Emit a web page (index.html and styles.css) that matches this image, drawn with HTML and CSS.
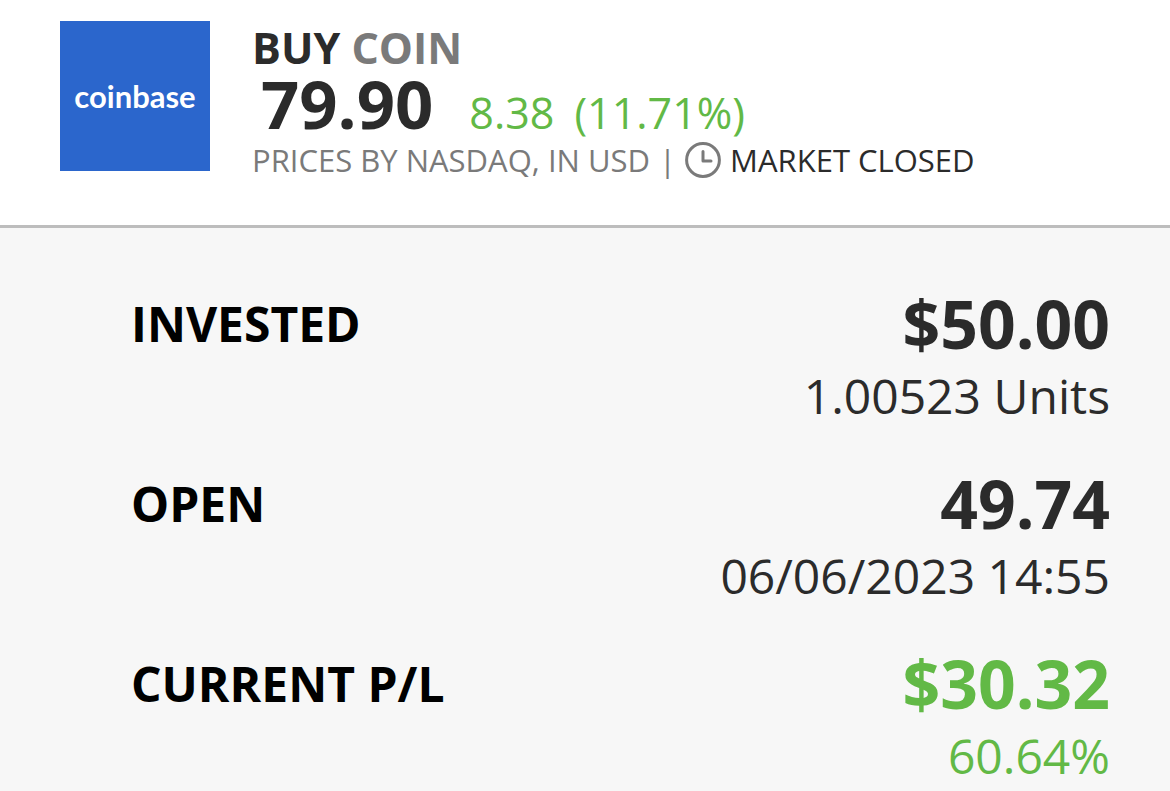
FILE: index.html
```html
<!DOCTYPE html>
<html lang="en">
<head>
<meta charset="utf-8">
<title>COIN position</title>
<link rel="stylesheet" href="styles.css">
</head>
<body>
<header class="instrument">
  <div class="logo">coinbase</div>
  <div class="summary">
    <h1 class="title">BUY <span class="symbol">COIN</span></h1>
    <div class="quote"><span class="price">79.90</span><span class="change">8.38</span><span class="change">(11.71%)</span></div>
    <div class="market"><span>PRICES BY NASDAQ, IN USD</span><span>|</span>
      <svg class="clock" viewBox="0 0 36 36" aria-hidden="true"><circle cx="18" cy="18" r="16.4"/><path d="M18 9.5v9.500h8"/></svg>
      <span class="status">MARKET CLOSED</span></div>
  </div>
</header>
<main class="details">
  <dl class="list">
    <div class="row"><dt>INVESTED</dt><dd><strong>$50.00</strong><span>1.00523 Units</span></dd></div>
    <div class="row"><dt>OPEN</dt><dd><strong>49.74</strong><span>06/06/2023 14:55</span></dd></div>
    <div class="row"><dt>CURRENT P/L</dt><dd class="gain"><strong>$30.32</strong><span>60.64%</span></dd></div>
  </dl>
</main>
</body>
</html>
```
FILE: styles.css
```css
* { box-sizing: border-box; }
body {
  margin: 0;
  min-height: 100vh;
  display: flex;
  flex-direction: column;
  background: #fff;
  color: #2b2b2b;
  font-family: "Open Sans", "Noto Sans", sans-serif;
}
.instrument {
  display: flex;
  gap: 42px;
  padding: 21px 60px 44px;
  border-bottom: 3px solid #bdbdbd;
}
.logo {
  width: 150px;
  height: 150px;
  flex: none;
  display: flex;
  align-items: center;
  justify-content: center;
  background: #2b66cc;
  color: #fff;
  font: 700 31px/40px Lato, sans-serif;
}
.title { margin: 0; font-size: 43px; line-height: 54px; font-weight: 700; }
.symbol { color: #7a7a7a; }
.quote { display: flex; align-items: baseline; gap: 20px; height: 64px; padding-left: 9px; line-height: 56px; }
.price { font-size: 67px; font-weight: 700; margin-right: 16px; }
.change { font-size: 43px; color: #62b946; }
.market { display: flex; align-items: center; gap: 9px; font-size: 31px; line-height: 42px; color: #7a7a7a; }
.clock { width: 36px; height: 36px; fill: none; stroke: #7a7a7a; stroke-width: 3; stroke-linecap: round; stroke-linejoin: round; }
.status { color: #2b2b2b; }
.details { flex: 1; background: #f7f7f7; padding: 61px 60px 0 131px; }
.list { margin: 0; }
.row { display: flex; justify-content: space-between; height: 180px; }
.row:last-child { height: auto; }
dt { font-size: 48px; line-height: 70px; font-weight: 700; color: #000; }
dd { margin: 0; display: flex; flex-direction: column; gap: 4px; text-align: right; font-size: 48px; line-height: 70px; }
strong { font-size: 66px; line-height: 68px; font-weight: 700; }
.gain { color: #62b946; }
```
